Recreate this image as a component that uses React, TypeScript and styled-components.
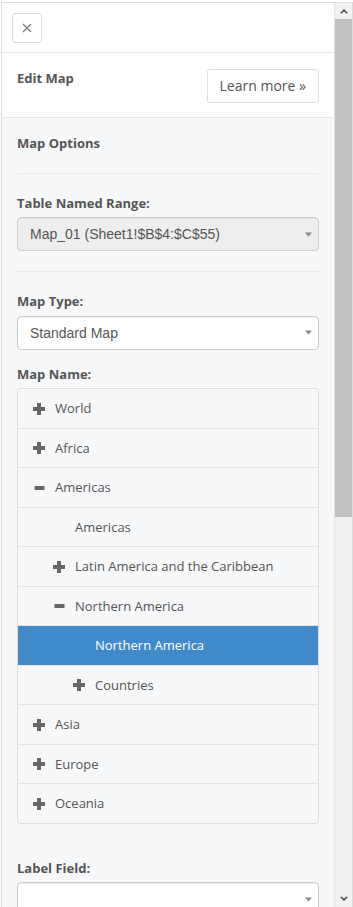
import React from "react";
import styled, { createGlobalStyle } from "styled-components";

const GlobalStyle = createGlobalStyle`
  html, body { margin: 0; padding: 0; background: #ffffff; }
  body { font-family: "Open Sans", "Liberation Sans", sans-serif; }
  * { box-sizing: border-box; }
`;

const Frame = styled.div`
  width: 352px;
  height: 905px;
  margin: 2px 0 0 1px;
  border: 1px solid #dcdcdc;
  border-bottom: none;
  display: flex;
  overflow: hidden;
`;

const Panel = styled.div`
  width: 333px;
  flex: none;
  border-right: 1px solid #e6e6e6;
  background: #f7f8fa;
  display: flex;
  flex-direction: column;
  overflow: hidden;
`;

const Header = styled.div`
  background: #ffffff;
  padding: 10px 10px 9px;
  border-bottom: 1px solid #e5e5e5;
  display: flex;
`;

const CloseButton = styled.button`
  width: 30px;
  height: 30px;
  padding: 0;
  border: 1px solid #dddddd;
  border-radius: 3px;
  background: #ffffff;
  display: flex;
  align-items: center;
  justify-content: center;
`;

const EditBar = styled.div`
  background: #ffffff;
  display: flex;
  justify-content: space-between;
  align-items: flex-start;
  padding: 16px 15px 14px;
  border-bottom: 1px solid #e5e5e5;
`;

const Title = styled.h2`
  margin: 0;
  font-size: 13px;
  font-weight: 700;
  line-height: 18.57px;
  color: #555555;
`;

const LearnButton = styled.button`
  font-family: "Open Sans", sans-serif;
  font-size: 14px;
  line-height: 20px;
  padding: 6px 12px;
  color: #555555;
  background: #ffffff;
  border: 1px solid #dddddd;
  border-radius: 3px;
`;

const Options = styled.div`
  padding: 16px 15px 0;
`;

const SectionHeading = styled.h3`
  margin: 0;
  font-size: 13px;
  font-weight: 700;
  line-height: 18.57px;
  color: #555555;
`;

const Rule = styled.div`
  height: 1px;
  background: #e8e9eb;
  margin: 20px 0;
`;

const Field = styled.div<{ $gap?: number }>`
  margin-bottom: ${(p) => p.$gap ?? 15}px;
`;

const Label = styled.label`
  display: block;
  font-size: 13px;
  font-weight: 700;
  line-height: 18.57px;
  margin-bottom: 5px;
  color: #555555;
`;

const SelectBox = styled.div<{ $disabled?: boolean }>`
  height: 34px;
  display: flex;
  align-items: center;
  justify-content: space-between;
  padding: 0 6px 0 12px;
  border: 1px solid #cccccc;
  border-radius: 4px;
  background: ${(p) => (p.$disabled ? "#eeeeee" : "#ffffff")};
  box-shadow: inset 0 1px 1px rgba(0, 0, 0, 0.075);
  font-family: "Liberation Sans", Arial, sans-serif;
  font-size: 14px;
  color: #555555;
`;

const Tree = styled.div`
  border: 1px solid #dddddd;
  border-radius: 4px;
  overflow: hidden;
`;

const TreeRow = styled.div<{ $level: number; $selected?: boolean }>`
  display: flex;
  align-items: center;
  padding: 10px 15px 10px ${(p) => 15 + p.$level * 20}px;
  font-size: 13px;
  line-height: 18.5px;
  color: ${(p) => (p.$selected ? "#ffffff" : "#555555")};
  background: ${(p) => (p.$selected ? "#428bca" : "transparent")};
  & + & {
    border-top: 1px solid #e3e4e6;
  }
`;

const IconSlot = styled.span`
  width: 12px;
  height: 12px;
  margin-right: 10px;
  flex: none;
  display: flex;
`;

const ScrollBar = styled.div`
  width: 17px;
  flex: none;
  background: #f1f1f1;
  display: flex;
  flex-direction: column;
`;

const ScrollArrow = styled.div<{ $h: number }>`
  height: ${(p) => p.$h}px;
  flex: none;
  display: flex;
  align-items: center;
  justify-content: center;
`;

const Thumb = styled.div`
  height: 498px;
  flex: none;
  background: #c1c1c1;
`;

const Spacer = styled.div`
  flex: 1;
`;

const Caret = () => (
  <svg width="7" height="5" viewBox="0 0 7 5">
    <path d="M0 0.5 H7 L3.5 4.5 Z" fill="#888888" />
  </svg>
);

const PlusIcon = () => (
  <svg width="12" height="12" viewBox="0 0 12 12">
    <rect x="0" y="4" width="12" height="4" fill="#666666" />
    <rect x="4" y="0" width="4" height="12" fill="#666666" />
  </svg>
);

const MinusIcon = () => (
  <svg width="12" height="12" viewBox="0 0 12 12">
    <rect x="1.5" y="4" width="10" height="4" fill="#666666" />
  </svg>
);

type Row = { label: string; level: number; icon?: "plus" | "minus"; selected?: boolean };

const rows: Row[] = [
  { label: "World", level: 0, icon: "plus" },
  { label: "Africa", level: 0, icon: "plus" },
  { label: "Americas", level: 0, icon: "minus" },
  { label: "Americas", level: 1 },
  { label: "Latin America and the Caribbean", level: 1, icon: "plus" },
  { label: "Northern America", level: 1, icon: "minus" },
  { label: "Northern America", level: 2, selected: true },
  { label: "Countries", level: 2, icon: "plus" },
  { label: "Asia", level: 0, icon: "plus" },
  { label: "Europe", level: 0, icon: "plus" },
  { label: "Oceania", level: 0, icon: "plus" },
];

export default function App() {
  return (
    <>
      <GlobalStyle />
      <Frame>
        <Panel>
          <Header>
            <CloseButton aria-label="Close">
              <svg width="10" height="10" viewBox="0 0 10 10">
                <path d="M1 1 L9 9 M9 1 L1 9" stroke="#777777" strokeWidth="1.2" />
              </svg>
            </CloseButton>
          </Header>
          <EditBar>
            <Title>Edit Map</Title>
            <LearnButton>Learn more »</LearnButton>
          </EditBar>
          <Options>
            <SectionHeading>Map Options</SectionHeading>
            <Rule />
            <Field $gap={0}>
              <Label>Table Named Range:</Label>
              <SelectBox $disabled>
                <span>Map_01 (Sheet1!$B$4:$C$55)</span>
                <Caret />
              </SelectBox>
            </Field>
            <Rule />
            <Field>
              <Label>Map Type:</Label>
              <SelectBox>
                <span>Standard Map</span>
                <Caret />
              </SelectBox>
            </Field>
            <Field $gap={35}>
              <Label>Map Name:</Label>
              <Tree>
                {rows.map((r, i) => (
                  <TreeRow key={i} $level={r.level} $selected={r.selected}>
                    <IconSlot>
                      {r.icon === "plus" && <PlusIcon />}
                      {r.icon === "minus" && <MinusIcon />}
                    </IconSlot>
                    <span>{r.label}</span>
                  </TreeRow>
                ))}
              </Tree>
            </Field>
            <Field>
              <Label>Label Field:</Label>
              <SelectBox>
                <span></span>
                <Caret />
              </SelectBox>
            </Field>
          </Options>
        </Panel>
        <ScrollBar>
          <ScrollArrow $h={16}>
            <svg width="8" height="5" viewBox="0 0 8 5">
              <path d="M0.8 4.3 L4 1.1 L7.2 4.3" stroke="#505050" strokeWidth="1.6" fill="none" />
            </svg>
          </ScrollArrow>
          <Thumb />
          <Spacer />
          <ScrollArrow $h={17}>
            <svg width="8" height="5" viewBox="0 0 8 5">
              <path d="M0.8 0.7 L4 3.9 L7.2 0.7" stroke="#505050" strokeWidth="1.6" fill="none" />
            </svg>
          </ScrollArrow>
        </ScrollBar>
      </Frame>
    </>
  );
}
